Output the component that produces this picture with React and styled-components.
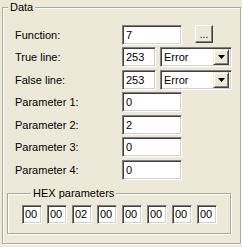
import React from 'react';
import styled, { createGlobalStyle } from 'styled-components';

const Global = createGlobalStyle`
  html, body { margin: 0; padding: 0; background: #ece9d8; }
  body {
    font-family: "Liberation Sans", Arial, sans-serif;
    font-size: 11px;
    color: #000;
  }
`;

const Page = styled.div`
  width: 242px;
  height: 247px;
  box-sizing: border-box;
  padding: 1px 0 0 2px;
`;

const GroupBox = styled.fieldset`
  margin: ${p => p.$m};
  padding: ${p => p.$pad};
  border: 1px solid #aca899;
  box-shadow: 1px 1px 0 #fff, inset 1px 1px 0 #fff;
  min-width: 0;
  width: ${p => p.$w}px;
  box-sizing: border-box;
`;

const Legend = styled.legend`
  margin-left: ${p => p.$ml}px;
  padding: 0 2px;
  background: #ece9d8;
  color: #000;
  line-height: 13px;
  position: relative;
`;

const Form = styled.div`
  display: flex;
  flex-direction: column;
  padding: 11px 0 0 12px;
`;

const Row = styled.div`
  display: flex;
  align-items: center;
  height: 20px;
  margin-top: ${p => p.$gap || 0}px;
`;

const Label = styled.span`
  width: 107px;
  flex: none;
  line-height: 13px;
  color: #000;
`;

const TextBox = styled.div`
  width: ${p => p.$w}px;
  height: ${p => p.$h || 20}px;
  flex: none;
  box-sizing: border-box;
  background: #fff;
  color: #000;
  border: 1px solid;
  border-color: #808080 #fff #fff #808080;
  box-shadow: inset 1px 1px 0 #404040, inset -1px -1px 0 #d4d0c8;
  padding: 0 0 0 ${p => p.$pl || 3}px;
  line-height: ${p => (p.$h || 20) - 2}px;
  white-space: nowrap;
  overflow: hidden;
`;

const Combo = styled.div`
  width: 72px;
  height: 20px;
  margin-left: 4px;
  flex: none;
  box-sizing: border-box;
  background: #fff;
  color: #000;
  border: 1px solid;
  border-color: #808080 #fff #fff #808080;
  box-shadow: inset 1px 1px 0 #404040, inset -1px -1px 0 #d4d0c8;
  padding: 2px 2px 2px 3px;
  display: flex;
  align-items: center;
  justify-content: space-between;
`;

const ComboText = styled.span`
  line-height: 14px;
`;

const ArrowButton = styled.div`
  width: 16px;
  height: 16px;
  box-sizing: border-box;
  background: #ece9d8;
  border: 1px solid;
  border-color: #ece9d8 #404040 #404040 #ece9d8;
  box-shadow: inset 1px 1px 0 #fff, inset -1px -1px 0 #808080;
  display: flex;
  align-items: center;
  justify-content: center;
`;

const DotsButton = styled.div`
  width: 18px;
  height: 18px;
  margin: -2px 0 0 13px;
  flex: none;
  box-sizing: border-box;
  background: #ece9d8;
  color: #000;
  border: 1px solid;
  border-color: #fff #404040 #404040 #fff;
  box-shadow: inset -1px -1px 0 #808080;
  display: flex;
  align-items: flex-end;
  justify-content: center;
  line-height: 12px;
  padding-bottom: 1px;
  font-size: 10px;
`;

const HexRow = styled.div`
  display: flex;
  gap: 5px;
`;

const Triangle = () => (
  <svg width="7" height="4" viewBox="0 0 7 4">
    <path d="M0 0H7L3.5 4Z" fill="#000" />
  </svg>
);

const params = ['0', '2', '0', '0'];
const hex = ['00', '00', '02', '00', '00', '00', '00', '00'];

export default function App() {
  return (
    <>
      <Global />
      <Page>
        <GroupBox $w={239} $m="0" $pad="0 0 9px 0">
          <Legend $ml={5}>Data</Legend>
          <Form>
            <Row>
              <Label>Function:</Label>
              <TextBox $w={60}>7</TextBox>
              <DotsButton>...</DotsButton>
            </Row>
            <Row $gap={2}>
              <Label>True line:</Label>
              <TextBox $w={34}>253</TextBox>
              <Combo>
                <ComboText>Error</ComboText>
                <ArrowButton><Triangle /></ArrowButton>
              </Combo>
            </Row>
            <Row $gap={3}>
              <Label>False line:</Label>
              <TextBox $w={34}>253</TextBox>
              <Combo>
                <ComboText>Error</ComboText>
                <ArrowButton><Triangle /></ArrowButton>
              </Combo>
            </Row>
            {params.map((v, i) => (
              <Row key={i} $gap={i % 2 === 0 ? 2 : 3}>
                <Label>Parameter {i + 1}:</Label>
                <TextBox $w={60}>{v}</TextBox>
              </Row>
            ))}
          </Form>
          <GroupBox $w={224} $m="7px 0 0 4px" $pad="5px 0 9px 14px">
            <Legend $ml={9}>HEX parameters</Legend>
            <HexRow>
              {hex.map((v, i) => (
                <TextBox key={i} $w={20} $h={19} $pl={2}>{v}</TextBox>
              ))}
            </HexRow>
          </GroupBox>
        </GroupBox>
      </Page>
    </>
  );
}
